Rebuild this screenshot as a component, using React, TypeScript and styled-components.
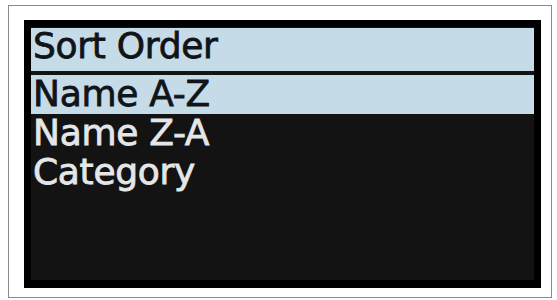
import React from 'react';
import styled, {createGlobalStyle} from "styled-components";

const GlobalStyle = createGlobalStyle`
    html, body {
        margin: 0;
        padding: 0;
        background: #ffffff;
    }
`

const items = ["Name A-Z", "Name Z-A", "Category"];

export default function App() {
    const selected = 0;
    return (
        <>
            <GlobalStyle/>
            <Frame>
                <Screen>
                    <Title>Sort Order</Title>
                    <List>
                        {items.map((item, i) => (
                            <Item key={item} active={i === selected}>{item}</Item>
                        ))}
                    </List>
                </Screen>
            </Frame>
        </>
    );
}

const Frame = styled.div`
    box-sizing: border-box;
    margin: 5px 0 0 8px;
    width: 544px;
    height: 293px;
    border: 1px solid #8a8a8a;
    padding: 14px 0 0 15px;
    background: #ffffff;
`
const Screen = styled.div`
    box-sizing: border-box;
    width: 517px;
    height: 268px;
    border: 7px solid #000000;
    border-bottom-width: 8px;
    background: #131313;
    padding-top: 1px;
    font-family: "DejaVu Sans", sans-serif;
    font-size: 36px;
    letter-spacing: -0.3px;
    -webkit-text-stroke: 0.8px currentColor;
`
const Title = styled.div`
    box-sizing: border-box;
    height: 43px;
    line-height: 35px;
    padding: 0 0 6px 2px;
    background: #c6dbe8;
    color: #101418;
    white-space: nowrap;
`
const List = styled.div`
    display: flex;
    flex-direction: column;
    margin-top: 4px;
`
const Item = styled.div<{ active: boolean }>`
    height: 39px;
    line-height: 37px;
    padding-left: 2px;
    background: ${p => p.active ? "#c6dbe8" : "transparent"};
    color: ${p => p.active ? "#101418" : "#e4e6e8"};
    white-space: nowrap;
`
